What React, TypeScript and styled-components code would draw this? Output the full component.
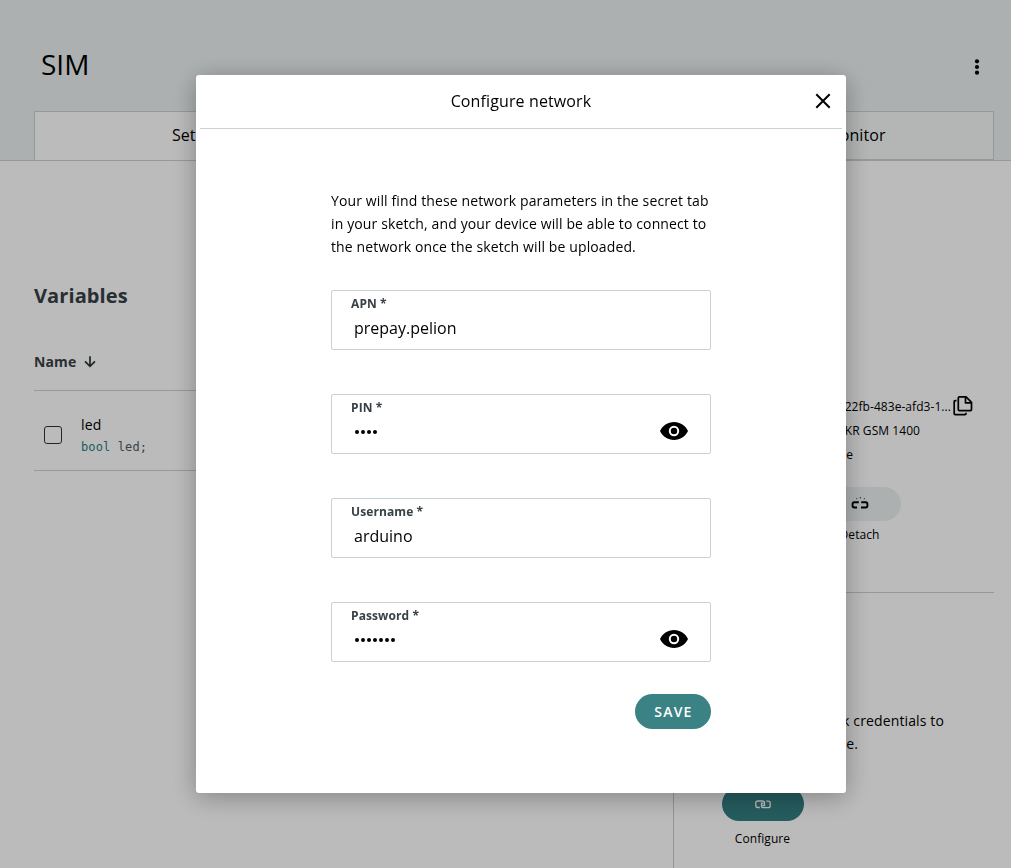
import React from "react";
import styled, { createGlobalStyle } from "styled-components";

const GlobalStyle = createGlobalStyle`
  * { box-sizing: border-box; }
  html, body { margin: 0; padding: 0; }
  body {
    font-family: "Open Sans", sans-serif;
    color: #000;
    background: #fff;
    overflow: hidden;
  }
  button { font-family: inherit; border: 0; padding: 0; background: none; }
  svg { display: block; }
`;

const Page = styled.div`
  width: 1011px;
  height: 868px;
  overflow: hidden;
  display: flex;
  flex-direction: column;
`;

const Header = styled.header`
  height: 161px;
  flex: none;
  padding: 0 17px 0 34px;
  background: #ecf1f1;
  border-bottom: 1px solid #c9d2d2;
  display: flex;
  flex-direction: column;
  justify-content: space-between;
`;

const TitleBar = styled.div`
  height: 111px;
  padding: 22px 5px 0 7px;
  display: flex;
  align-items: center;
  justify-content: space-between;
`;

const Title = styled.h1`
  margin: 0 0 5px;
  font-size: 28px;
  line-height: 36px;
  font-weight: 400;
`;

const KebabButton = styled.button`
  width: 24px;
  height: 24px;
  display: flex;
  align-items: center;
  justify-content: center;
`;

const Tabs = styled.nav`
  height: 49px;
  display: grid;
  grid-template-columns: repeat(3, 1fr);
  border: 1px solid #c9d2d2;
  border-bottom: 0;
`;

const Tab = styled.div<{ $active?: boolean }>`
  display: flex;
  align-items: center;
  justify-content: center;
  padding: 0 2px 2px 0;
  font-size: 16px;
  line-height: 24px;
  letter-spacing: 0.1px;
  background: ${(p) => (p.$active ? "#fff" : "#f5f8f7")};
  border-bottom: 1px solid ${(p) => (p.$active ? "#fff" : "#c9d2d2")};
`;

const Content = styled.main`
  flex: 1;
  display: flex;
  padding: 0 17px 0 34px;
`;

const Variables = styled.section`
  width: 639px;
  padding: 120px 24px 0 0;
`;

const SectionTitle = styled.h2`
  margin: 0;
  font-size: 20px;
  line-height: 30px;
  font-weight: 700;
  color: #374146;
  letter-spacing: 0.1px;
`;

const ColumnHead = styled.div`
  height: 80px;
  padding-top: 22px;
  display: flex;
  align-items: center;
  gap: 8px;
  font-size: 14px;
  font-weight: 700;
  letter-spacing: 0.1px;
  color: #374146;
  border-bottom: 1px solid #c9d2d2;
`;

const VariableRow = styled.div`
  height: 80px;
  padding: 8px 0 0 10px;
  display: flex;
  align-items: center;
  gap: 19px;
  border-bottom: 1px solid #c9d2d2;
`;

const Checkbox = styled.span`
  width: 18px;
  height: 18px;
  border: 1px solid #2c353a;
  border-radius: 3px;
`;

const VariableText = styled.div`
  padding-top: 2px;
`;

const VariableName = styled.div`
  font-size: 14px;
  line-height: 20px;
  padding-bottom: 2px;
  letter-spacing: 0.2px;
`;

const Declaration = styled.code`
  display: block;
  font-family: "DejaVu Sans Mono", monospace;
  font-size: 12px;
  line-height: 20px;
  letter-spacing: 0.12px;
  color: #4e5b61;
`;

const Keyword = styled.span`
  color: #2a8084;
`;

const Device = styled.aside`
  flex: 1;
  padding: 234px 0 0 48px;
  border-left: 1px solid #c9c9c9;
`;

const Info = styled.div`
  height: 198px;
  margin-left: -48px;
  padding-left: 48px;
  border-bottom: 1px solid #c9d2d2;
`;

const InfoRow = styled.div<{ $width: number }>`
  width: ${(p) => p.$width}px;
  height: 24px;
  font-size: 12px;
  line-height: 24px;
  letter-spacing: 0.06px;
  white-space: nowrap;
  display: flex;
  justify-content: flex-end;
  align-items: center;
  gap: 2px;
  svg { margin-bottom: 2px; }
`;

const Action = styled.div<{ $offset?: number; $gap: number }>`
  width: 82px;
  margin-left: ${(p) => p.$offset ?? 0}px;
  display: flex;
  flex-direction: column;
  align-items: center;
  gap: ${(p) => p.$gap}px;
`;

const ActionLabel = styled.span`
  padding-right: 1px;
  font-size: 12px;
  line-height: 20px;
  letter-spacing: 0.06px;
`;

const Pill = styled.button<{ $primary?: boolean }>`
  width: 82px;
  height: 34px;
  border-radius: 17px;
  display: flex;
  align-items: center;
  justify-content: center;
  background: ${(p) => (p.$primary ? "#337e80" : "#ecf1f1")};
  color: ${(p) => (p.$primary ? "#fff" : "#000")};
`;

const DetachArea = styled.div`
  padding-top: 20px;
`;

const Hint = styled.p<{ $width: number }>`
  margin: 0;
  width: ${(p) => p.$width}px;
  font-size: 14px;
  line-height: 23px;
  letter-spacing: 0.13px;
  white-space: nowrap;
  text-align: right;
`;

const Network = styled.div`
  padding-top: 116px;
`;

const ConfigureArea = styled.div`
  padding-top: 32px;
`;

const Overlay = styled.div`
  position: fixed;
  inset: 0;
  padding-left: 31px;
  display: flex;
  align-items: center;
  justify-content: center;
  background: rgba(0, 0, 0, 0.267);
`;

const Dialog = styled.div`
  width: 650px;
  height: 718px;
  background: #fff;
  border-radius: 3px;
  box-shadow: 0 4px 26px rgba(0, 0, 0, 0.3);
`;

const DialogHeader = styled.div`
  height: 54px;
  margin: 0 4px;
  padding-bottom: 2px;
  border-bottom: 1px solid #c9d2d2;
  display: grid;
  grid-template-columns: 38px 1fr 38px;
  align-items: center;
`;

const DialogTitle = styled.h2`
  grid-column: 2;
  margin: 0;
  font-size: 16px;
  line-height: 24px;
  font-weight: 400;
  letter-spacing: 0.12px;
  text-align: center;
`;

const Close = styled.button`
  display: flex;
  align-items: center;
  justify-content: center;
  height: 24px;
`;

const Form = styled.form`
  width: 380px;
  margin: 0 0 0 135px;
  padding-top: 60px;
  display: flex;
  flex-direction: column;
`;

const Intro = styled.p`
  margin: 0 0 32px;
  font-size: 14px;
  line-height: 23px;
  letter-spacing: 0.125px;
  white-space: nowrap;
`;

const Field = styled.div`
  height: 60px;
  margin-bottom: 44px;
  padding: 4px 22px 0 19px;
  border: 1px solid #c9d2d2;
  border-radius: 2px;
  &:last-of-type { margin-bottom: 32px; }
`;

const Label = styled.label`
  display: block;
  font-size: 12px;
  line-height: 18px;
  font-weight: 700;
  letter-spacing: 0.1px;
  color: #374146;
`;

const ValueRow = styled.div<{ $secret: boolean }>`
  height: ${(p) => (p.$secret ? 28 : 30)}px;
  padding-left: 3px;
  display: flex;
  align-items: center;
  justify-content: space-between;
`;

const Value = styled.span`
  font-size: 16px;
  line-height: 24px;
`;

const Dots = styled.span`
  display: flex;
  gap: 2px;
  padding: 2px 0 0 1px;
`;

const Dot = styled.i`
  width: 4px;
  height: 4px;
  border-radius: 50%;
  background: #000;
`;

const Save = styled.button`
  align-self: flex-end;
  width: 76px;
  height: 35px;
  padding-left: 1px;
  border-radius: 18px;
  background: #3a8284;
  color: #fff;
  font-size: 14px;
  font-weight: 600;
  letter-spacing: 1.2px;
`;

const KebabIcon = () => (
  <svg width="6" height="18" viewBox="0 0 6 18" fill="#000">
    <circle cx="3" cy="3.300" r="2.1" />
    <circle cx="3" cy="9" r="2.1" />
    <circle cx="3" cy="14.700" r="2.1" />
  </svg>
);

const ArrowDownIcon = () => (
  <svg width="12" height="12" viewBox="0 0 12 12" fill="none" stroke="#2c353a" strokeWidth="1.7">
    <path d="M6 .3v10M1 5.300l5 5 5-5" />
  </svg>
);

const CopyIcon = () => (
  <svg width="20" height="20" viewBox="0 0 20 20" fill="none" stroke="#000" strokeWidth="1.700" strokeLinejoin="round">
    <path d="M6.300 .9h6.800l5.400 5.400v7.300c0 .6-.4 1-1 1H6.300c-.6 0-1-.4-1-1V1.900c0-.6.4-1 1-1z" />
    <path d="M12.500 .9v6h6" />
    <path d="M3.500 4.700H2.200c-.6 0-1 .4-1 1v11.900c0 .6.400 1 1 1h9.800c.6 0 1-.4 1-1v-.8" />
  </svg>
);

const UnlinkIcon = () => (
  <svg width="18" height="16" viewBox="0 0 18 16" fill="none" stroke="currentColor">
    <path
      d="M7.800 6.200H3.300C2.200 6.200 1.600 6.900 1.600 7.900v1.900c0 1.100.6 1.700 1.700 1.700h2.700M10.200 6.200h4.500c1.100 0 1.700.7 1.700 1.700v1.900c0 1.100-.6 1.700-1.700 1.700h-4.700"
      strokeWidth="1.9"
    />
    <path d="M5.500 2.200l.4 1M9.300 1v1.400M13.500 2.200l-.4 1" strokeWidth="1" opacity="0.8" />
  </svg>
);

const LinkIcon = () => (
  <svg width="16" height="9" viewBox="0 0 16 9" fill="none" stroke="currentColor" strokeWidth="1.300">
    <path d="M4.800 7.500H2.800C1.500 7.500.8 6.700.8 5.500v-2.500c0-1.200.7-2 2-2h4.700c1.300 0 2 .8 2 2v2.500H7.300" />
    <path d="M11.200 1.200h2c1.300 0 2 .8 2 2v2.500c0 1.200-.7 2-2 2H8.500c-1.300 0-2-.8-2-2V3.200h2.200" />
  </svg>
);

const CloseIcon = () => (
  <svg width="16" height="16" viewBox="0 0 16 16" fill="none" stroke="#000" strokeWidth="2">
    <path d="M1.300 1.300l13.400 13.400M14.700 1.300L1.300 14.700" />
  </svg>
);

const EyeIcon = () => (
  <svg width="28" height="18" viewBox="0 0 28 18">
    <path d="M14 0C7.800 0 2.600 3.600 0 9c2.600 5.400 7.800 9 14 9s11.400-3.600 14-9C25.400 3.600 20.200 0 14 0z" fill="#000" />
    <circle cx="14" cy="9" r="4.200" fill="none" stroke="#fff" strokeWidth="2" />
  </svg>
);

const fields = [
  { label: "APN *", value: "prepay.pelion" },
  { label: "PIN *", dots: 4 },
  { label: "Username *", value: "arduino" },
  { label: "Password *", dots: 7 },
];

export default function App() {
  return (
    <>
      <GlobalStyle />
      <Page>
        <Header>
          <TitleBar>
            <Title>SIM</Title>
            <KebabButton type="button" aria-label="More"><KebabIcon /></KebabButton>
          </TitleBar>
          <Tabs>
            <Tab $active>Setup</Tab>
            <Tab>Sketch</Tab>
            <Tab>Serial Monitor</Tab>
          </Tabs>
        </Header>
        <Content>
          <Variables>
            <SectionTitle>Variables</SectionTitle>
            <ColumnHead>
              Name <ArrowDownIcon />
            </ColumnHead>
            <VariableRow>
              <Checkbox />
              <VariableText>
                <VariableName>led</VariableName>
                <Declaration>
                  <Keyword>bool</Keyword> led;
                </Declaration>
              </VariableText>
            </VariableRow>
          </Variables>
          <Device>
            <Info>
              <InfoRow $width={251}>
                <span>22fb-483e-afd3-1...</span>
                <CopyIcon />
              </InfoRow>
              <InfoRow $width={198}>MKR GSM 1400</InfoRow>
              <InfoRow $width={131}>Offline</InfoRow>
              <DetachArea>
                <Action $offset={97} $gap={4}>
                  <Pill><UnlinkIcon /></Pill>
                  <ActionLabel>Detach</ActionLabel>
                </Action>
              </DetachArea>
            </Info>
            <Network>
              <Hint $width={222}>Send network credentials to</Hint>
              <Hint $width={136}>your device.</Hint>
            </Network>
            <ConfigureArea>
              <Action $gap={8}>
                <Pill $primary><LinkIcon /></Pill>
                <ActionLabel>Configure</ActionLabel>
              </Action>
            </ConfigureArea>
          </Device>
        </Content>
      </Page>
      <Overlay>
        <Dialog>
          <DialogHeader>
            <DialogTitle>Configure network</DialogTitle>
            <Close type="button" aria-label="Close"><CloseIcon /></Close>
          </DialogHeader>
          <Form>
            <Intro>
              Your will find these network parameters in the secret tab
              <br />
              in your sketch, and your device will be able to connect to
              <br />
              the network once the sketch will be uploaded.
            </Intro>
            {fields.map((f) => (
              <Field key={f.label}>
                <Label>{f.label}</Label>
                <ValueRow $secret={Boolean(f.dots)}>
                  {f.dots ? (
                    <>
                      <Dots>
                        {Array.from({ length: f.dots }, (_, i) => <Dot key={i} />)}
                      </Dots>
                      <EyeIcon />
                    </>
                  ) : (
                    <Value>{f.value}</Value>
                  )}
                </ValueRow>
              </Field>
            ))}
            <Save type="button">SAVE</Save>
          </Form>
        </Dialog>
      </Overlay>
    </>
  );
}
